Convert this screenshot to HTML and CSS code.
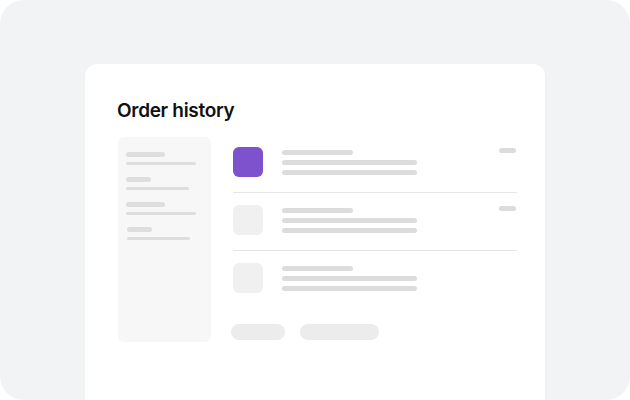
FILE: index.html
```html
<!DOCTYPE html>
<html lang="en">
<head>
<meta charset="utf-8">
<title>Order history</title>
<link rel="stylesheet" href="styles.css">
</head>
<body>
<div class="frame">
  <div class="card">
    <h1 class="title">Order history</h1>
    <div class="content">
      <aside class="sidebar">
        <div class="group"><span class="bar bar-a"></span><span class="bar bar-b"></span></div>
        <div class="group"><span class="bar bar-c"></span><span class="bar bar-d"></span></div>
        <div class="group"><span class="bar bar-a"></span><span class="bar bar-b"></span></div>
        <div class="group shift"><span class="bar bar-c"></span><span class="bar bar-d"></span></div>
      </aside>
      <main class="main">
        <div class="row">
          <div class="thumb thumb-active"></div>
          <div class="lines"><span class="line short"></span><span class="line long"></span><span class="line long"></span></div>
          <span class="tag"></span>
        </div>
        <div class="row">
          <div class="thumb"></div>
          <div class="lines"><span class="line short"></span><span class="line long"></span><span class="line long"></span></div>
          <span class="tag"></span>
        </div>
        <div class="row">
          <div class="thumb"></div>
          <div class="lines"><span class="line short"></span><span class="line long"></span><span class="line long"></span></div>
        </div>
        <div class="actions">
          <span class="btn btn-sm"></span>
          <span class="btn btn-lg"></span>
        </div>
      </main>
    </div>
  </div>
</div>
</body>
</html>
```

FILE: styles.css
```css
html, body {
  margin: 0;
  padding: 0;
  background: #ffffff;
}

.frame {
  width: 630px;
  height: 400px;
  box-sizing: border-box;
  background: #f2f3f5;
  border-radius: 24px;
  overflow: hidden;
  padding: 64px 0 0 85px;
}

.card {
  width: 460px;
  height: 380px;
  box-sizing: border-box;
  background: #ffffff;
  border-radius: 12px;
  box-shadow: 0 1px 3px rgba(0, 0, 0, 0.04);
  padding: 36px 28px 0 33px;
}

.title {
  margin: 0 0 15px -1px;
  font-family: Inter, "Liberation Sans", sans-serif;
  font-weight: 600;
  font-size: 19px;
  line-height: 22px;
  letter-spacing: -0.3px;
  color: #111111;
}

.content {
  display: flex;
  gap: 22px;
  align-items: flex-start;
}

.sidebar {
  width: 93px;
  height: 205px;
  box-sizing: border-box;
  background: #f7f7f7;
  border-radius: 6px;
  padding: 15px 8px 0;
  display: flex;
  flex-direction: column;
  gap: 12px;
}

.group {
  display: flex;
  flex-direction: column;
  gap: 5px;
}

.group.shift {
  padding-left: 1px;
}

.bar {
  display: block;
  background: #dedede;
  border-radius: 3px;
}

.bar-a { width: 39px; height: 5px; }
.bar-b { width: 70px; height: 3px; }
.bar-c { width: 25px; height: 5px; }
.bar-d { width: 63px; height: 3px; }

.main {
  width: 284px;
  display: flex;
  flex-direction: column;
}

.row {
  display: flex;
  align-items: center;
  gap: 19px;
  padding: 12px 0 15px;
  border-bottom: 1px solid #e6e6e6;
}

.row:first-child {
  padding-top: 10px;
}

.row:nth-child(3) {
  border-bottom: none;
}

.thumb {
  width: 30px;
  height: 30px;
  border-radius: 6px;
  background: #f0f0f0;
  flex: none;
}

.thumb-active {
  background: #7e52cc;
}

.lines {
  display: flex;
  flex-direction: column;
  gap: 5px;
  flex: 1;
}

.line {
  display: block;
  height: 5px;
  border-radius: 3px;
  background: #dcdcdc;
}

.line.short { width: 71px; }
.line.long { width: 135px; }

.tag {
  align-self: flex-start;
  margin: 1px 1px 0 0;
  width: 17px;
  height: 5px;
  border-radius: 3px;
  background: #dcdcdc;
}

.actions {
  display: flex;
  gap: 15px;
  margin: 16px 0 0 -2px;
}

.btn {
  display: block;
  height: 16px;
  border-radius: 8px;
  background: #ececec;
}

.btn-sm { width: 54px; }
.btn-lg { width: 79px; }
```
